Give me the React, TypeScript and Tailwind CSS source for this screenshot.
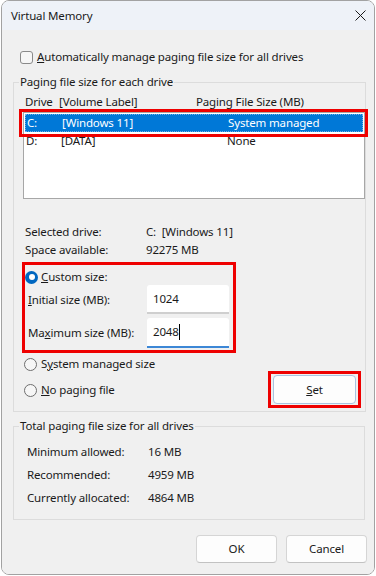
import React from "react";

function Radio({ checked }: { checked?: boolean }) {
    if (checked) {
        return (
            <span className="w-[13px] h-[13px] rounded-full bg-[#0067c0] flex items-center justify-center shrink-0">
                <span className="w-[6px] h-[6px] rounded-full bg-white" />
            </span>
        );
    }
    return <span className="w-[13px] h-[13px] rounded-full border border-[#6e6e6e] bg-[#f6f6f6] shrink-0" />;
}

function InfoRow({ label, value, h = "h-[18px]" }: { label: string; value: string; h?: string }) {
    return (
        <div className={`flex items-center ${h}`}>
            <span className="w-[121px]">{label}</span>
            <span className="whitespace-pre">{value}</span>
        </div>
    );
}

export default function App() {
    return (
        <div className="w-[376px] h-[576px] bg-white font-['Noto_Sans',sans-serif] text-[11.5px] tracking-[-0.15px] leading-[16px] text-[#1a1a1a]">
            <div className="ml-[1px] w-[374px] h-[575px] rounded-[8px] border border-[#a2a2a2] overflow-hidden flex flex-col">
                {/* Title bar */}
                <div className="h-[29px] bg-[#eef2f8] flex items-center justify-between pl-[9px] pr-[8px] shrink-0">
                    <span>Virtual Memory</span>
                    <svg width="11" height="11" viewBox="0 0 11 11" className="text-[#1a1a1a]">
                        <path d="M0.5 0.5 L10.5 10.5 M10.5 0.5 L0.5 10.5" stroke="currentColor" strokeWidth="1" />
                    </svg>
                </div>

                {/* Body */}
                <div className="flex-1 bg-[#f0f0f0] pl-[11px] flex flex-col">
                    <div className="mt-[20px] ml-[7px] h-[14px] flex items-center gap-[4px]">
                        <span className="w-[13px] h-[13px] rounded-[3px] border border-[#8a8a8a] bg-[#f6f6f6]" />
                        <span>
                            <u>A</u>utomatically manage paging file size for all drives
                        </span>
                    </div>

                    {/* Paging file size for each drive */}
                    <fieldset className="mt-[10px] w-[353px] border border-[#dcdcdc] pb-[3px]">
                        <legend className="ml-[5px] px-[1px] h-[16px]">Paging file size for each drive</legend>

                        <div className="mt-[4px] pl-[11px] h-[16px] flex">
                            <span className="w-[34px]">Drive</span>
                            <span className="w-[137px]">[Volume Label]</span>
                            <span>Paging File Size (MB)</span>
                        </div>

                        <div className="mt-[2px] ml-[9px] w-[342px] h-[87px] border border-[#a7a7a7] bg-white pt-[1px] px-[1px]">
                            <div className="relative h-[18px] bg-[#0078d7] text-white flex items-center pl-[1px] border border-dotted border-[#6fb0ea]">
                                <span className="w-[35px]">C:</span>
                                <span className="w-[166px]">[Windows 11]</span>
                                <span>System managed</span>
                                <div className="absolute -left-[7px] -right-[6px] -top-[6px] -bottom-[6px] border-[3px] border-[#ee0000]" />
                            </div>
                            <div className="h-[18px] flex items-center pl-[1px]">
                                <span className="w-[35px]">D:</span>
                                <span className="w-[166px]">[DATA]</span>
                                <span>None</span>
                            </div>
                        </div>

                        <div className="mt-[24px] pl-[11px]">
                            <InfoRow label="Selected drive:" value="C:  [Windows 11]" />
                            <InfoRow label="Space available:" value="92275 MB" />
                        </div>

                        {/* Custom size box */}
                        <div className="mt-[3px] ml-[8px] w-[214px] border-[3px] border-[#ee0000] pb-[2px]">
                            <div className="mt-[4px] h-[16px] flex items-center gap-[3px]">
                                <Radio checked />
                                <span>
                                    <u>C</u>ustom size:
                                </span>
                            </div>
                            <div className="h-[29px] flex items-center pl-[3px]">
                                <span className="w-[119px]">
                                    <u>I</u>nitial size (MB):
                                </span>
                                <div className="w-[82px] h-[29px] bg-white rounded-t-[3px] border-b-2 border-[#cfcfcf] flex items-center pl-[6px]">
                                    1024
                                </div>
                            </div>
                            <div className="mt-[4px] h-[30px] flex items-center pl-[3px]">
                                <span className="w-[119px]">
                                    Ma<u>x</u>imum size (MB):
                                </span>
                                <div className="w-[82px] h-[30px] bg-white rounded-t-[3px] border-b-2 border-[#3c87d6] flex items-center pl-[6px]">
                                    2048
                                    <span className="w-[1px] h-[16px] bg-black" />
                                </div>
                            </div>
                        </div>

                        <div className="flex justify-between mt-[3px]">
                            <div className="ml-[10px] flex flex-col gap-[10px]">
                                <div className="h-[16px] flex items-center gap-[4px]">
                                    <Radio />
                                    <span>
                                        S<u>y</u>stem managed size
                                    </span>
                                </div>
                                <div className="h-[16px] flex items-center gap-[4px]">
                                    <Radio />
                                    <span>
                                        <u>N</u>o paging file
                                    </span>
                                </div>
                            </div>
                            <div className="mt-[15px] mr-[4px] w-[93px] h-[37px] border-[3px] border-[#ee0000] px-[2px] py-[1px]">
                                <button className="w-full h-[29px] rounded-[4px] border border-[#a9c3e0] bg-[#fdfdfd]">
                                    <u>S</u>et
                                </button>
                            </div>
                        </div>
                    </fieldset>

                    {/* Totals */}
                    <fieldset className="mt-[6px] w-[352px] border border-[#dcdcdc] pb-[10px]">
                        <legend className="ml-[5px] px-[1px] h-[16px]">Total paging file size for all drives</legend>
                        <div className="mt-[6px] pl-[13px]">
                            <InfoRow label="Minimum allowed:" value="16 MB" h="h-[23px]" />
                            <InfoRow label="Recommended:" value="4959 MB" h="h-[23px]" />
                            <InfoRow label="Currently allocated:" value="4864 MB" h="h-[23px]" />
                        </div>
                    </fieldset>

                    <div className="mt-[15px] pr-[7px] flex justify-end gap-[9px]">
                        <button className="w-[81px] h-[28px] rounded-[4px] border border-[#d5d5d5] border-b-[#c2c2c2] bg-[#fdfdfd]">OK</button>
                        <button className="w-[81px] h-[28px] rounded-[4px] border border-[#d5d5d5] border-b-[#c2c2c2] bg-[#fdfdfd]">Cancel</button>
                    </div>
                </div>
            </div>
        </div>
    );
}
